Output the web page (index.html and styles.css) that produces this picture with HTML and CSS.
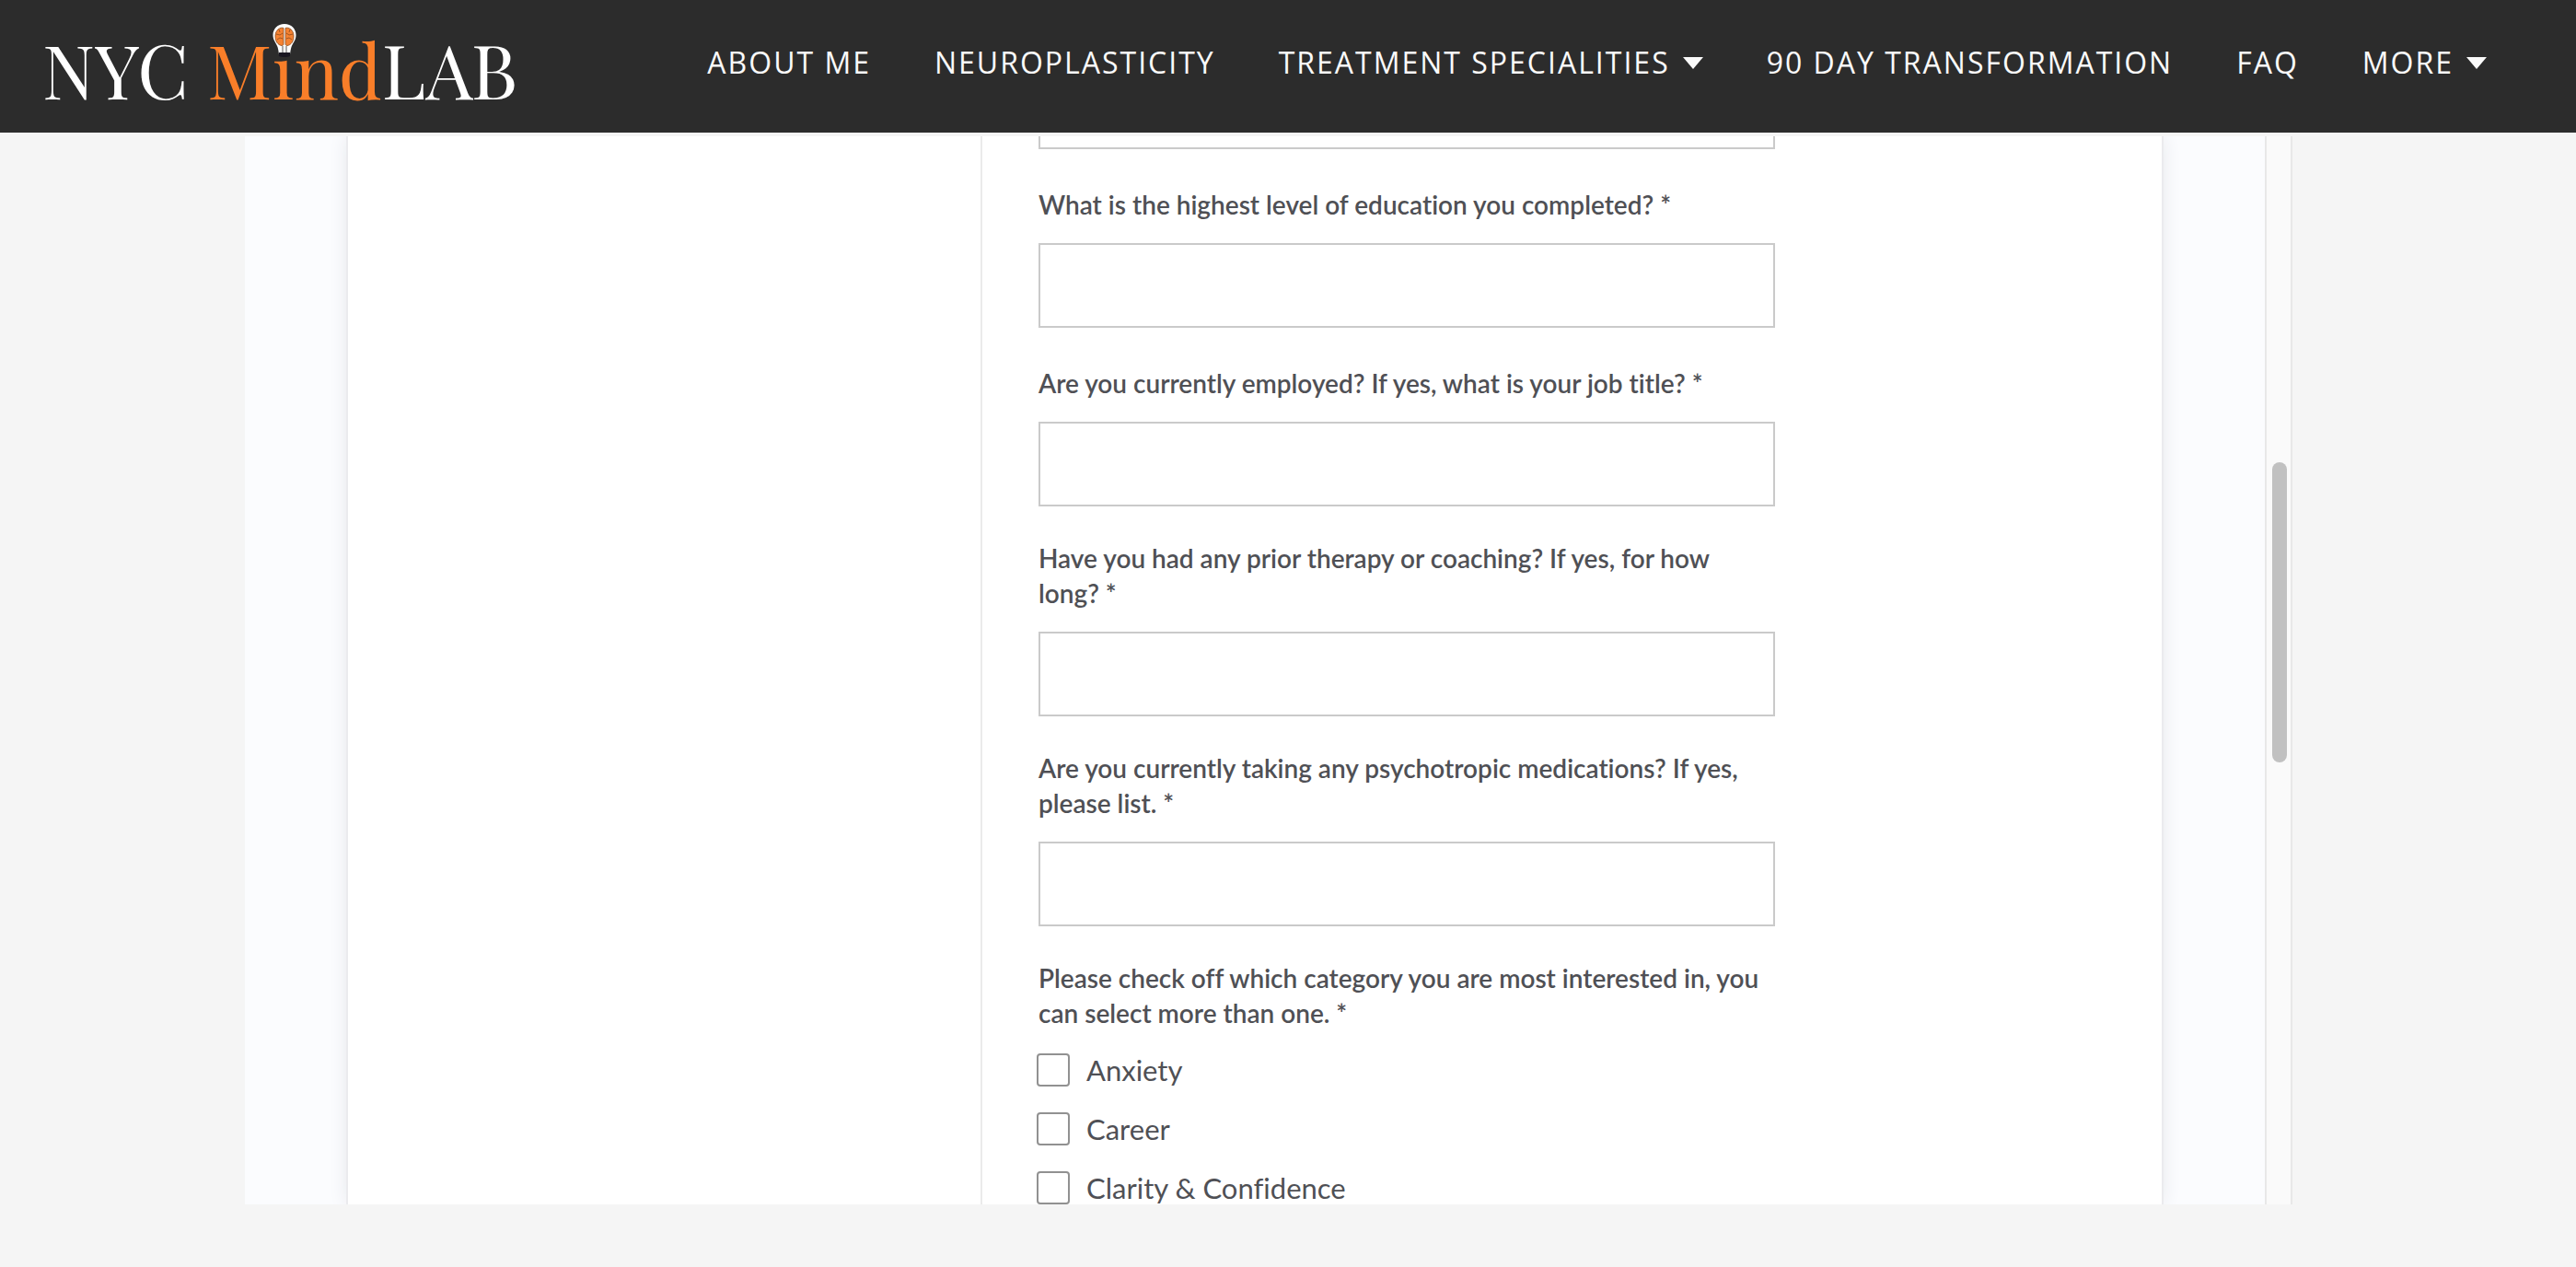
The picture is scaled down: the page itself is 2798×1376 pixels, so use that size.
FILE: index.html
```html
<!DOCTYPE html>
<html lang="en">
<head>
<meta charset="utf-8">
<title>NYC MindLAB</title>
<link rel="stylesheet" href="styles.css">
</head>
<body>
<header class="header">
  <a class="logo" href="#" aria-label="NYC MindLAB">NYC <span class="logo-mind">M<span class="logo-i">ı<svg class="bulb" viewBox="0 0 26 36" aria-hidden="true">
    <path fill="#fff" d="M13 0C5.500 0 .5 5.500.5 12c0 6 3.500 8.500 5 13 .8 2.500 1 5 1.500 8h12c.5-3 .7-5.500 1.500-8 1.500-4.500 5-7 5-13C25.500 5.500 20.500 0 13 0z"/>
    <path fill="#f58232" stroke="#8a4a1c" stroke-width=".8" d="M12 4.500C8 3 3 7 3 13c-.2 6 3 10 7 10.500 1.500 0 2-.7 2-2zM14 4.500C18 3 23 7 23 13c.2 6-3 10-7 10.500-1.500 0-2-.7-2-2z"/>
    <path fill="none" stroke="#8a4a1c" stroke-width=".8" d="M4 11l4 1 3-2M5 17l3-2 3 1M7 6l1 3M22 11l-4 1-3-2M21 17l-3-2-3 1M19 6l-1 3"/>
    <path fill="none" stroke="#444" stroke-width=".9" d="M11 24v9M15 24v9"/>
    <path fill="#191722" d="M7 31h12v4c-2 .8-4 1-6 1s-4-.2-6-1z"/>
  </svg></span>nd</span>LAB</a>
  <nav class="nav" aria-label="Main">
    <a href="#">ABOUT ME</a>
    <a href="#">NEUROPLASTICITY</a>
    <a href="#">TREATMENT SPECIALITIES<span class="caret"></span></a>
    <a href="#">90 DAY TRANSFORMATION</a>
    <a href="#">FAQ</a>
    <a href="#">MORE<span class="caret"></span></a>
  </nav>
</header>
<main class="frame">
  <div class="canvas">
    <div class="card">
      <form class="form">
        <input class="text-box text-box-first" type="text" aria-label="Previous question">
        <div class="field">
          <label for="education">What is the highest level of education you completed? *</label>
          <input class="text-box" id="education" type="text">
        </div>
        <div class="field">
          <label for="employed">Are you currently employed? If yes, what is your job title? *</label>
          <input class="text-box" id="employed" type="text">
        </div>
        <div class="field">
          <label for="therapy">Have you had any prior therapy or coaching? If yes, for how long? *</label>
          <input class="text-box" id="therapy" type="text">
        </div>
        <div class="field">
          <label for="medications">Are you currently taking any psychotropic medications? If yes, please list. *</label>
          <input class="text-box" id="medications" type="text">
        </div>
        <fieldset class="choices">
          <legend>Please check off which category you are most interested in, you can select more than one. *</legend>
          <label class="choice"><input type="checkbox">Anxiety</label>
          <label class="choice"><input type="checkbox">Career</label>
          <label class="choice"><input type="checkbox">Clarity &amp; Confidence</label>
        </fieldset>
      </form>
    </div>
  </div>
  <div class="track"><div class="thumb"></div></div>
</main>
</body>
</html>
```
FILE: styles.css
```css
* {
  box-sizing: border-box;
}

body {
  margin: 0;
  height: 100vh;
  display: flex;
  flex-direction: column;
  overflow: hidden;
  background: #f5f5f5;
  color: #4f5055;
  font-family: Lato, "Open Sans", sans-serif;
  font-variant-ligatures: none;
}

.header {
  flex: none;
  height: 144px;
  display: flex;
  align-items: center;
  padding: 0 97px 8px 46px;
  background: #2c2c2c;
}

.logo {
  flex: none;
  padding-top: 12px;
  color: #fff;
  font: 81px/112px "Playfair Display", "Liberation Serif", serif;
  text-decoration: none;
  white-space: nowrap;
}

.logo-mind {
  color: #f97e29;
}

.logo-i {
  position: relative;
}

.bulb {
  position: absolute;
  left: 0;
  top: 6px;
  width: 26px;
  height: 36px;
}

.nav {
  flex: 1;
  display: flex;
  justify-content: space-between;
  margin-left: 206px;
}

.nav a {
  display: flex;
  align-items: center;
  color: #fafafa;
  font: 32px/44px "Open Sans", sans-serif;
  letter-spacing: 2px;
  text-decoration: none;
  white-space: nowrap;
}

.caret {
  margin-left: 14px;
  border: 11px solid transparent;
  border-top: 13px solid #fafafa;
  border-bottom: 0;
}

.frame {
  flex: 1;
  min-height: 0;
  display: flex;
  margin: 4px 308px 68px 266px;
  overflow: hidden;
}

.canvas {
  flex: 1;
  padding: 0 112px;
  overflow: hidden;
  background: #fbfcfe;
}

.card {
  height: 100%;
  padding-left: 687px;
  background: #fff;
  box-shadow: 0 0 0 2px #ebebee, 0 0 20px #e4e5ea;
}

.form {
  display: flow-root;
  height: 100%;
  padding-left: 61px;
  border-left: 2px solid #ebebeb;
}

.text-box {
  display: block;
  width: 100%;
  height: 92px;
  padding: 0 20px;
  border: 2px solid #cacaca;
  background: #fff;
  font: inherit;
}

.text-box-first {
  max-width: 800px;
  margin-top: -78px;
}

.field,
.choices {
  max-width: 800px;
}

.field label {
  display: block;
  padding: 37px 0 23px;
}

.field label,
.choices legend {
  font-size: 28px;
  font-weight: 600;
  line-height: 38px;
}

.field:nth-of-type(-n + 2) label {
  padding-top: 41px;
}

.choices {
  margin: 0;
  padding: 0;
  border: 0;
}

.choices legend {
  padding: 37px 0 25px;
}

.choice {
  display: flex;
  align-items: center;
  gap: 18px;
  height: 36px;
  margin: 0 0 28px -2px;
  font-size: 31px;
  line-height: 34px;
}

.choice input {
  appearance: none;
  width: 36px;
  height: 36px;
  margin: 0;
  border: 2px solid #919191;
  border-radius: 4px;
  background: #fff;
}

.track {
  flex: none;
  width: 30px;
  padding: 354px 4px 0 6px;
  border: solid #e8e8e8;
  border-width: 0 2px;
  background: #fafafa;
}

.thumb {
  width: 16px;
  height: 326px;
  border-radius: 8px;
  background: #c1c1c1;
}
```
